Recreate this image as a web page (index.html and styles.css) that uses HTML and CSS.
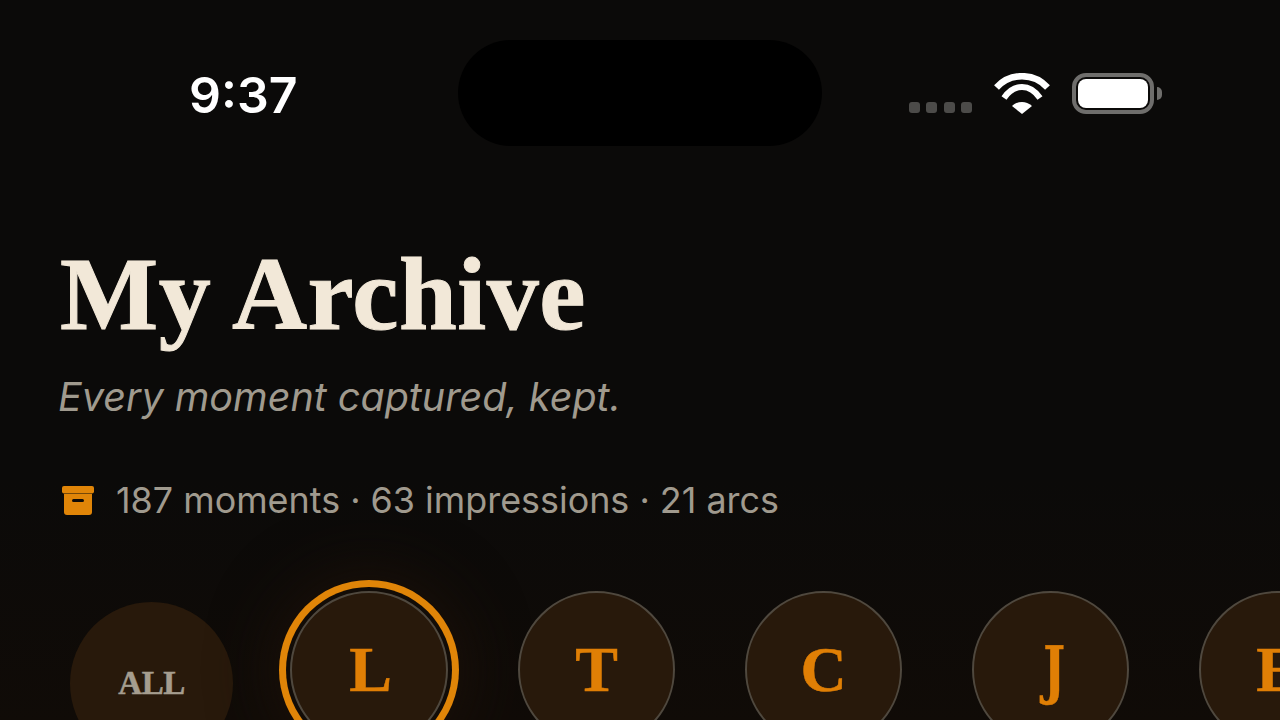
FILE: index.html
```html
<!DOCTYPE html>
<html>

<head>
    <meta charset="utf-8" />
    <title>My Archive</title>
    <link rel="stylesheet" href="styles.css">
</head>

<body>
    <div class="status-bar">
        <div class="time">9:37</div>
        <div class="island"></div>
        <div class="status-icons">
            <div class="signal">
                <span></span><span></span><span></span><span></span>
            </div>
            <svg class="wifi" width="56" height="41" viewBox="0 0 56 41">
                <path d="M28 41 L18 33 C24 27.7 32 27.7 38 33 Z" fill="#fff" />
                <path d="M10 25 C20 10.3 36 10.3 46 25" fill="none" stroke="#fff" stroke-width="6" />
                <path d="M2.5 14.5 C16 -0.6 40 -0.6 53.5 14.5" fill="none" stroke="#fff" stroke-width="6.5" />
            </svg>
            <div class="battery">
                <div class="battery-body">
                    <div class="battery-fill"></div>
                </div>
                <div class="battery-cap"></div>
            </div>
        </div>
    </div>

    <div class="header">
        <h1 class="title">My Archive</h1>
        <p class="subtitle">Every moment captured, kept.</p>
        <div class="stats">
            <svg class="box-icon" width="32" height="29" viewBox="0 0 32 29">
                <rect x="0" y="0" width="32" height="7.5" rx="2" fill="#e08508" />
                <path d="M2 8 H30 V26 Q30 29 27 29 H5 Q2 29 2 26 Z" fill="#e08508" />
                <rect x="10" y="13" width="12" height="3" rx="1.5" fill="#0b0a09" />
            </svg>
            <span>187 moments · 63 impressions · 21 arcs</span>
        </div>
    </div>

    <div class="people">
        <div class="person person-all">ALL</div>
        <div class="person person-active">L</div>
        <div class="person">T</div>
        <div class="person">C</div>
        <div class="person person-j"><span>J</span></div>
        <div class="person">E</div>
    </div>
</body>

</html>
```

FILE: styles.css
```css
* {
    margin: 0;
    padding: 0;
    box-sizing: border-box;
}

body {
    width: 1280px;
    height: 720px;
    overflow: hidden;
    background: linear-gradient(#0b0a09 0, #0b0a09 480px, #100b07 720px);
    font-family: Inter, "Liberation Sans", sans-serif;
}

.status-bar {
    display: flex;
    align-items: center;
    height: 106px;
    margin-top: 40px;
    padding-left: 189px;
    padding-right: 118px;
}

.time {
    width: 269px;
    padding-top: 4px;
    color: #fff;
    font-size: 50px;
    font-weight: 600;
    line-height: 106px;
}

.island {
    width: 364px;
    height: 106px;
    border-radius: 53px;
    background: #000;
}

.status-icons {
    display: flex;
    align-items: center;
    gap: 22px;
    margin-left: auto;
}

.signal {
    display: flex;
    gap: 6.5px;
    margin-top: 28px;
}

.signal span {
    width: 11px;
    height: 11px;
    border-radius: 3px;
    background: #4c4b49;
}

.battery {
    display: flex;
    align-items: center;
    gap: 3px;
}

.battery-body {
    width: 82px;
    height: 41px;
    padding: 2px;
    border: 4px solid #6f6e6c;
    border-radius: 14px;
}

.battery-fill {
    height: 100%;
    border-radius: 8px;
    background: #fff;
}

.battery-cap {
    width: 5px;
    height: 13px;
    border-radius: 0 5px 5px 0;
    background: #6f6e6c;
}

.header {
    padding: 93px 0 0 60px;
}

.title {
    color: #f2e8d8;
    font-family: "Liberation Serif", serif;
    font-size: 104px;
    font-weight: 700;
    letter-spacing: 0.5px;
    line-height: 110px;
    -webkit-text-stroke: 1px #f2e8d8;
}

.subtitle {
    margin: 26px 0 0 -2px;
    color: #a09a8e;
    font-size: 39.5px;
    font-style: italic;
    line-height: 44px;
}

.stats {
    display: flex;
    align-items: center;
    gap: 22px;
    margin-top: 61px;
    color: #a09a8e;
    font-size: 35.9px;
    line-height: 40px;
}

.box-icon {
    flex: none;
    margin-left: 2px;
}

.people {
    display: flex;
    align-items: flex-start;
    gap: 70px;
    height: 200px;
    padding: 71px 0 0 70px;
    overflow: hidden;
}

.person {
    position: relative;
    display: flex;
    flex: none;
    align-items: center;
    justify-content: center;
    width: 157px;
    height: 157px;
    border: 2.5px solid #4f483e;
    border-radius: 50%;
    background: #28190b;
    color: #e07f05;
    font-family: "Liberation Serif", serif;
    font-size: 64px;
    font-weight: 700;
    -webkit-text-stroke: 0.5px #e07f05;
}

.person-all {
    width: 163px;
    height: 163px;
    margin: 11px -13px 0 0;
    border: 0;
    color: #a59d8f;
    font-size: 33px;
    letter-spacing: -0.5px;
    -webkit-text-stroke: 0.5px #a59d8f;
}

.person-active {
    width: 158px;
    height: 158px;
    padding-left: 3px;
    box-shadow: 0 0 0 4px #120c07, 0 0 0 11px #e08508, 0 0 60px 20px #1a1009;
}

.person-j {
    padding-left: 8px;
    font-family: "DejaVu Serif", serif;
}

.person-j span {
    transform: scaleX(0.72);
}
```
